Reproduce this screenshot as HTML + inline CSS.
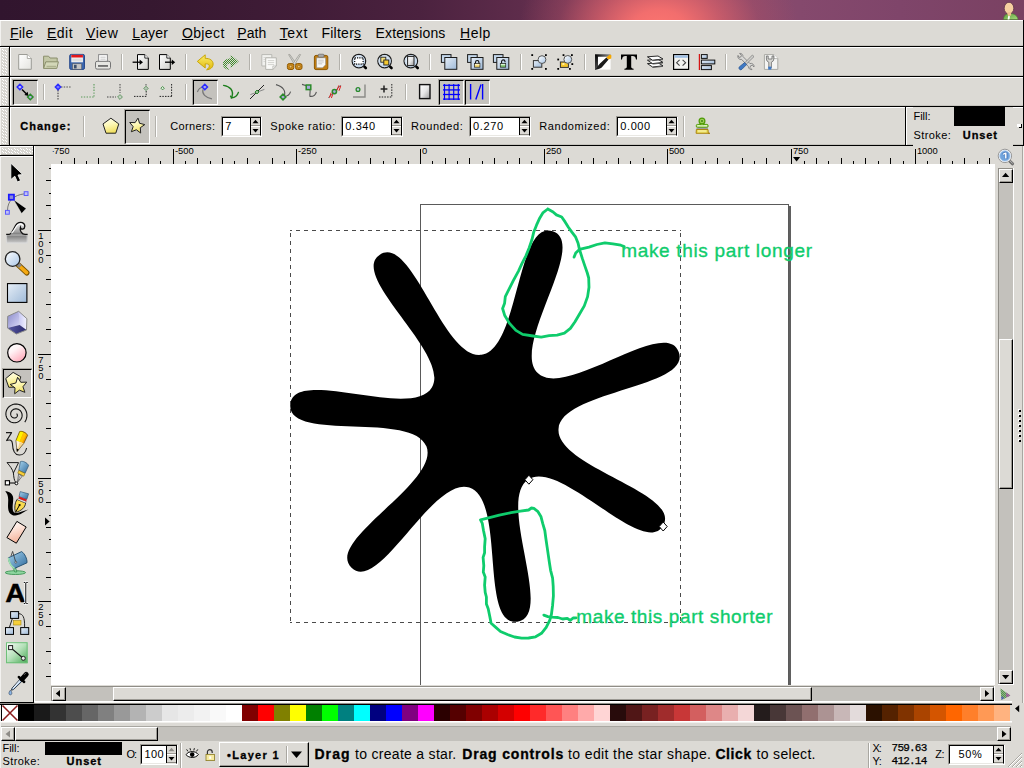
<!DOCTYPE html>
<html><head><meta charset="utf-8"><title>Inkscape</title>
<style>
html,body{margin:0;padding:0;}
body{width:1024px;height:768px;overflow:hidden;position:relative;background:#dcdad5;font-family:"Liberation Sans",sans-serif;}
body div,body svg{position:absolute;display:block;}
svg{overflow:visible;}
u{text-decoration:underline;text-underline-offset:1px;text-decoration-thickness:1px;}
</style></head><body>
<div style="left:0;top:0;width:1024px;height:20px;background:radial-gradient(ellipse 140px 100px at 659px 30px, rgba(253,118,112,1) 0%, rgba(248,112,110,.95) 20%, rgba(228,100,106,.66) 45%, rgba(185,82,100,.3) 72%, rgba(150,70,100,0) 100%),linear-gradient(90deg,#31152e 0,#361830 150px,#401c37 300px,#4b223f 420px,#5e2c4b 520px,#7a3c5c 600px,#8d4a6a 700px,#85496d 800px,#7f456a 900px,#7a4162 1024px);"></div>
<svg style="left:1002px;top:1px;" width="18" height="19" viewBox="0 0 18 19"><defs><linearGradient id="ug" x1="0" y1="0" x2="1" y2="1"><stop offset="0" stop-color="#5d9a3a"/><stop offset="1" stop-color="#a6dc7c"/></linearGradient></defs>
<path d="M1.5 18.5 C1.5 14 5 12.5 8 12.5 C12 12.5 15.5 14.5 16 18.5Z" fill="url(#ug)" stroke="#4a7a30" stroke-width=".6"/>
<path d="M5.6 18.5 L6.2 15 L8 15.2 L7.4 18.5Z" fill="#fff"/>
<ellipse cx="7" cy="7.2" rx="4.8" ry="5.9" fill="#f6cfa0" stroke="#5a3048" stroke-width=".8"/>
<path d="M5 11.5 L9 11 L9.2 14.5 L6 15Z" fill="#f0c090"/></svg>
<div style="left:0px;top:20px;width:1024px;height:748px;background:#dcdad5;"></div>
<div style="left:0px;top:20px;width:1023px;height:1px;background:#fff;"></div>
<div style="left:0px;top:21px;width:1px;height:747px;background:#f3f2f0;"></div>
<div style="left:1023px;top:20px;width:1px;height:126px;background:#000;"></div>
<div style="left:1022px;top:146px;width:1px;height:557px;background:#a9a7a1;"></div>
<div style="left:1023px;top:146px;width:1px;height:557px;background:#f1f0ed;"></div>
<div style="left:0px;top:46px;width:1023px;height:1px;background:#000;"></div>
<div style="left:0px;top:76px;width:1023px;height:1px;background:#000;"></div>
<div style="left:0px;top:106px;width:1023px;height:1px;background:#000;"></div>
<div style="left:0px;top:145px;width:1023px;height:1px;background:#000;"></div>
<div style="left:10px;top:47px;width:1013px;height:1px;background:#fff;"></div>
<div style="left:10px;top:77px;width:1013px;height:1px;background:#fff;"></div>
<div style="left:10px;top:107px;width:1013px;height:1px;background:#fff;"></div>
<div style="left:9px;top:46px;width:1px;height:100px;background:#000;"></div>
<div style="left:10px;top:47px;width:1px;height:98px;background:#fff;"></div>
<div style="left:9px;top:76px;width:2px;height:1px;background:#000;"></div>
<div style="left:9px;top:106px;width:2px;height:1px;background:#000;"></div>
<svg style="left:0;top:0" width="0" height="0"><defs><pattern id="pH" width="6" height="3" patternUnits="userSpaceOnUse"><rect x="0" y="0" width="1" height="1" fill="#fff"/><rect x="1" y="1" width="1" height="1" fill="#fff"/><rect x="3" y="1" width="1" height="1" fill="#fff"/><rect x="4" y="2" width="1" height="1" fill="#fff"/></pattern></defs></svg>
<svg style="left:1px;top:48px;shape-rendering:crispEdges;" width="8" height="28" viewBox="0 0 8 28"><rect width="8" height="28" fill="#d8d6d1"/><rect x="7" width="1" height="28" fill="#b4b2ac"/><g transform="translate(1,1)"><rect width="6" height="27" fill="url(#pH)"/></g></svg>
<svg style="left:1px;top:78px;shape-rendering:crispEdges;" width="8" height="28" viewBox="0 0 8 28"><rect width="8" height="28" fill="#d8d6d1"/><rect x="7" width="1" height="28" fill="#b4b2ac"/><g transform="translate(1,1)"><rect width="6" height="27" fill="url(#pH)"/></g></svg>
<svg style="left:1px;top:108px;shape-rendering:crispEdges;" width="8" height="37" viewBox="0 0 8 37"><rect width="8" height="37" fill="#d8d6d1"/><rect x="7" width="1" height="37" fill="#b4b2ac"/><g transform="translate(1,1)"><rect width="6" height="36" fill="url(#pH)"/></g></svg>
<div style="left:0px;top:47px;width:9px;height:1px;background:#fff;"></div>
<div style="left:0px;top:77px;width:9px;height:1px;background:#fff;"></div>
<div style="left:0px;top:107px;width:9px;height:1px;background:#fff;"></div>
<div style="left:0px;top:45px;width:1023px;height:1px;background:#c6c4be;"></div>
<div style="left:0px;top:75px;width:1023px;height:1px;background:#c6c4be;"></div>
<div style="left:0px;top:105px;width:1023px;height:1px;background:#c6c4be;"></div>
<div style="left:0px;top:144px;width:1023px;height:1px;background:#c6c4be;"></div>
<div style="left:9px;top:46px;width:1px;height:100px;background:#000;"></div>
<div style="left:0px;top:21px;width:1px;height:747px;background:#f3f2f0;"></div>
<div style="left:9.90px;top:26.15px;font:14px/14px 'Liberation Sans';color:#000;white-space:pre;letter-spacing:0.280px;"><u>F</u>ile</div>
<div style="left:46.90px;top:26.15px;font:14px/14px 'Liberation Sans';color:#000;white-space:pre;letter-spacing:0.525px;"><u>E</u>dit</div>
<div style="left:86.00px;top:26.15px;font:14px/14px 'Liberation Sans';color:#000;white-space:pre;letter-spacing:0.569px;"><u>V</u>iew</div>
<div style="left:132.20px;top:26.15px;font:14px/14px 'Liberation Sans';color:#000;white-space:pre;letter-spacing:0.145px;"><u>L</u>ayer</div>
<div style="left:181.90px;top:26.15px;font:14px/14px 'Liberation Sans';color:#000;white-space:pre;letter-spacing:0.388px;"><u>O</u>bject</div>
<div style="left:237.20px;top:26.15px;font:14px/14px 'Liberation Sans';color:#000;white-space:pre;letter-spacing:0.100px;"><u>P</u>ath</div>
<div style="left:279.70px;top:26.15px;font:14px/14px 'Liberation Sans';color:#000;white-space:pre;letter-spacing:0.641px;"><u>T</u>ext</div>
<div style="left:321.40px;top:26.15px;font:14px/14px 'Liberation Sans';color:#000;white-space:pre;letter-spacing:0.265px;">Filter<u>s</u></div>
<div style="left:375.50px;top:26.15px;font:14px/14px 'Liberation Sans';color:#000;white-space:pre;letter-spacing:0.146px;">Exte<u>n</u>sions</div>
<div style="left:460.00px;top:26.15px;font:14px/14px 'Liberation Sans';color:#000;white-space:pre;letter-spacing:0.502px;"><u>H</u>elp</div>
<div style="left:121px;top:54px;width:1px;height:16px;background:#b3b1ab;"></div>
<div style="left:122px;top:54px;width:1px;height:16px;background:#fff;"></div>
<div style="left:185px;top:54px;width:1px;height:16px;background:#b3b1ab;"></div>
<div style="left:186px;top:54px;width:1px;height:16px;background:#fff;"></div>
<div style="left:249px;top:54px;width:1px;height:16px;background:#b3b1ab;"></div>
<div style="left:250px;top:54px;width:1px;height:16px;background:#fff;"></div>
<div style="left:339px;top:54px;width:1px;height:16px;background:#b3b1ab;"></div>
<div style="left:340px;top:54px;width:1px;height:16px;background:#fff;"></div>
<div style="left:429px;top:54px;width:1px;height:16px;background:#b3b1ab;"></div>
<div style="left:430px;top:54px;width:1px;height:16px;background:#fff;"></div>
<div style="left:520px;top:54px;width:1px;height:16px;background:#b3b1ab;"></div>
<div style="left:521px;top:54px;width:1px;height:16px;background:#fff;"></div>
<div style="left:584px;top:54px;width:1px;height:16px;background:#b3b1ab;"></div>
<div style="left:585px;top:54px;width:1px;height:16px;background:#fff;"></div>
<div style="left:725px;top:54px;width:1px;height:16px;background:#b3b1ab;"></div>
<div style="left:726px;top:54px;width:1px;height:16px;background:#fff;"></div>
<div style="left:43px;top:84px;width:1px;height:16px;background:#b3b1ab;"></div>
<div style="left:44px;top:84px;width:1px;height:16px;background:#fff;"></div>
<div style="left:185px;top:84px;width:1px;height:16px;background:#b3b1ab;"></div>
<div style="left:186px;top:84px;width:1px;height:16px;background:#fff;"></div>
<div style="left:405px;top:84px;width:1px;height:16px;background:#b3b1ab;"></div>
<div style="left:406px;top:84px;width:1px;height:16px;background:#fff;"></div>
<div style="left:12px;top:79px;width:26px;height:1px;background:#a9a7a1;"></div>
<div style="left:12px;top:79px;width:1px;height:26px;background:#a9a7a1;"></div>
<div style="left:13px;top:80px;width:25px;height:25px;background:#c4c2bd;box-sizing:border-box;border-top:1px solid #000;border-left:1px solid #000;border-bottom:1px solid #fff;border-right:1px solid #fff;"></div>
<div style="left:192px;top:79px;width:26px;height:1px;background:#a9a7a1;"></div>
<div style="left:192px;top:79px;width:1px;height:26px;background:#a9a7a1;"></div>
<div style="left:193px;top:80px;width:25px;height:25px;background:#c4c2bd;box-sizing:border-box;border-top:1px solid #000;border-left:1px solid #000;border-bottom:1px solid #fff;border-right:1px solid #fff;"></div>
<div style="left:438px;top:79px;width:26px;height:1px;background:#a9a7a1;"></div>
<div style="left:438px;top:79px;width:1px;height:26px;background:#a9a7a1;"></div>
<div style="left:439px;top:80px;width:25px;height:25px;background:#c4c2bd;box-sizing:border-box;border-top:1px solid #000;border-left:1px solid #000;border-bottom:1px solid #fff;border-right:1px solid #fff;"></div>
<div style="left:464px;top:79px;width:26px;height:1px;background:#a9a7a1;"></div>
<div style="left:464px;top:79px;width:1px;height:26px;background:#a9a7a1;"></div>
<div style="left:465px;top:80px;width:25px;height:25px;background:#c4c2bd;box-sizing:border-box;border-top:1px solid #000;border-left:1px solid #000;border-bottom:1px solid #fff;border-right:1px solid #fff;"></div>
<svg style="left:0px;top:0px;" width="1024" height="768" viewBox="0 0 1024 768"><defs>
<linearGradient id="gDoc" x1="0" y1="0" x2="1" y2="1"><stop offset="0" stop-color="#ffffff"/><stop offset="1" stop-color="#e4e4e0"/></linearGradient>
<linearGradient id="gDocD" x1="0" y1="0" x2="1" y2="1"><stop offset="0" stop-color="#ffffff"/><stop offset="1" stop-color="#cfcfca"/></linearGradient>
<linearGradient id="gBlue" x1="0" y1="0" x2="1" y2="1"><stop offset="0" stop-color="#e6eef7"/><stop offset="1" stop-color="#9fbad8"/></linearGradient>
<linearGradient id="gLens" x1="0" y1="0" x2="1" y2="1"><stop offset="0" stop-color="#ffffff"/><stop offset="1" stop-color="#a9c6e6"/></linearGradient>
<linearGradient id="gYel" x1="0.2" y1="0" x2="0.5" y2="1"><stop offset="0" stop-color="#fffff0"/><stop offset=".45" stop-color="#fdf8b8"/><stop offset="1" stop-color="#f1df5e"/></linearGradient>
<linearGradient id="gPage" x1="0" y1="0" x2="1" y2="1"><stop offset="0" stop-color="#ffffff"/><stop offset=".5" stop-color="#e8e8e8"/><stop offset="1" stop-color="#9a9a9a"/></linearGradient>
<linearGradient id="gPink" x1="0.1" y1="0" x2=".8" y2="1"><stop offset="0" stop-color="#ffffff"/><stop offset=".35" stop-color="#fff4f6"/><stop offset="1" stop-color="#ffa4b6"/></linearGradient>
<linearGradient id="gErase" x1="0" y1="0" x2=".3" y2="1"><stop offset="0" stop-color="#ffffff"/><stop offset=".4" stop-color="#fde6dc"/><stop offset="1" stop-color="#f4b49c"/></linearGradient>
<linearGradient id="gWave" x1="0" y1="0" x2="0" y2="1"><stop offset="0" stop-color="#f4f4f4"/><stop offset=".45" stop-color="#a0a0a0"/><stop offset=".58" stop-color="#747474"/><stop offset="1" stop-color="#cfcfcf"/></linearGradient>
<linearGradient id="gGreen" x1="0" y1="0" x2="1" y2="1"><stop offset="0" stop-color="#ffffff"/><stop offset=".5" stop-color="#b4e0b8"/><stop offset="1" stop-color="#46a852"/></linearGradient>
<linearGradient id="gPencil" x1="0" y1="0" x2="1" y2=".3"><stop offset="0" stop-color="#fff000"/><stop offset="1" stop-color="#f08000"/></linearGradient>
<linearGradient id="gBucket" x1="0" y1="0" x2="1" y2="1"><stop offset="0" stop-color="#a8d4ee"/><stop offset="1" stop-color="#2f6a9c"/></linearGradient>
<linearGradient id="gBoxL" x1="0" y1="0" x2="1" y2="1"><stop offset="0" stop-color="#8888c8"/><stop offset="1" stop-color="#d8d8f8"/></linearGradient>
<linearGradient id="gBoxR" x1="0" y1="0" x2="1" y2="0"><stop offset="0" stop-color="#c8c8f4"/><stop offset="1" stop-color="#f4f4ff"/></linearGradient>
<linearGradient id="gBoxB" x1="0" y1="0" x2="1" y2="0"><stop offset="0" stop-color="#5a5aa4"/><stop offset="1" stop-color="#28286c"/></linearGradient>
<linearGradient id="gUndo" x1="0" y1="0" x2="0" y2="1"><stop offset="0" stop-color="#fbee6a"/><stop offset="1" stop-color="#e2b80c"/></linearGradient>
<linearGradient id="gFS" x1="0" y1="0" x2="1" y2="0"><stop offset="0" stop-color="#000"/><stop offset="1" stop-color="#999"/></linearGradient>
<linearGradient id="gFS2" x1="0" y1="0" x2="0" y2="1"><stop offset="0" stop-color="#000"/><stop offset="1" stop-color="#555"/></linearGradient>
<pattern id="pChk" width="2" height="2" patternUnits="userSpaceOnUse"><rect width="1" height="1" fill="#3d8a2a"/><rect x="1" y="1" width="1" height="1" fill="#3d8a2a"/></pattern>
<radialGradient id="gCms"><stop offset="0" stop-color="#fff"/><stop offset="1" stop-color="#888"/></radialGradient>
</defs><path d="M18.7 54.5 h8.6 l4 4 v10.8 h-12.6z" fill="url(#gDoc)" stroke="#9c9c96" stroke-width="1" stroke-linejoin="round"/><path d="M27.299999999999997 54.5 v4 h4" fill="#fff" stroke="#9c9c96" stroke-width="0.8" stroke-linejoin="round"/><path d="M43.6 68.3 V56.2 h5 l1.4 1.8 h7.2 v4" fill="#c3c7a6" stroke="#8a8e6c" stroke-width="1" stroke-linejoin="round"/><path d="M43.6 68.4 l2.2 -6.6 h12.6 l-1.6 6.6z" fill="#d3d7b8" stroke="#8a8e6c" stroke-width="1" stroke-linejoin="round"/><path d="M46.5 66.5 h9.5" stroke="#aeb290" stroke-width="1.5"/><rect x="69.7" y="54.4" width="14.8" height="15" rx="1.5" fill="#3b66ad" stroke="#2a4b8d" stroke-width="1"/><rect x="71.3" y="54.9" width="11.6" height="7.4" fill="#f4f4f4"/><rect x="71.3" y="54.9" width="11.6" height="2.6" fill="#e4181c"/><path d="M72.3 59.2 h9.6 M72.3 60.8 h9.6" stroke="#c8c8c8" stroke-width=".7"/><rect x="72.6" y="63.8" width="9" height="5.4" fill="#c4c4c4" stroke="#555" stroke-width=".5"/><rect x="74" y="64.8" width="2.6" height="3.6" fill="#3b4f6d"/><rect x="98.6" y="54.6" width="8.8" height="7.5" fill="#fbfbfb" stroke="#8c8c8c" stroke-width="1"/><path d="M100.4 57.2 h5.2 M100.4 59.2 h5.2" stroke="#bdbdbd" stroke-width=".8"/><rect x="95.5" y="61.3" width="15" height="7.8" rx="1.6" fill="#e6e6e2" stroke="#757575" stroke-width="1"/><rect x="98" y="65.2" width="10" height="1.5" fill="#555"/><path d="M137.5 54.6 h7.300000000000001 l3.5 3.5 v11.3 h-10.8z" fill="url(#gDocD)" stroke="#000" stroke-width="1" stroke-linejoin="round"/><path d="M144.8 54.6 v3.5 h3.5" fill="#fff" stroke="#000" stroke-width="0.8" stroke-linejoin="round"/><path d="M132.6 62.2 h8" stroke="#000" stroke-width="1.3"/><path d="M139.6 59.4 l3.4 2.8 l-3.4 2.8z" fill="#000"/><path d="M159.5 54.6 h7.300000000000001 l3.5 3.5 v11.3 h-10.8z" fill="url(#gDocD)" stroke="#000" stroke-width="1" stroke-linejoin="round"/><path d="M166.8 54.6 v3.5 h3.5" fill="#fff" stroke="#000" stroke-width="0.8" stroke-linejoin="round"/><path d="M165 62.2 h8" stroke="#000" stroke-width="1.3"/><path d="M171.8 59.4 l3.4 2.8 l-3.4 2.8z" fill="#000"/><path d="M197.3 61.4 L205.2 54.8 V58.4 C210 58.2 213.1 60.6 213.1 64 C213.1 67.2 210.6 69.5 206.6 69.8 C208.6 68.2 209.6 66.8 209.2 65.3 C208.8 64 207.2 63.7 205.2 63.9 V68 Z" fill="url(#gUndo)" stroke="#c9a606" stroke-width="1" stroke-linejoin="round"/><g transform="translate(436,0) scale(-1,1)"><path d="M197.3 61.4 L205.2 54.8 V58.4 C210 58.2 213.1 60.6 213.1 64 C213.1 67.2 210.6 69.5 206.6 69.8 C208.6 68.2 209.6 66.8 209.2 65.3 C208.8 64 207.2 63.7 205.2 63.9 V68 Z" fill="url(#pChk)"/></g><path d="M261.8 54.6 h9.99 l0.01 0.01 v11.39 h-10z" fill="#f1f1ee" stroke="#b9b9b4" stroke-width="1" stroke-linejoin="round"/><path d="M271.79 54.6 v0.01 h0.01" fill="#fff" stroke="#b9b9b4" stroke-width="0.8" stroke-linejoin="round"/><path d="M263.5 57.5 h6.5 M263.5 59.5 h6.5 M263.5 61.5 h3" stroke="#d2d2ce" stroke-width=".8"/><path d="M265.7 57.8 h10.6 v8.2 l-3.4 3.4 h-7.2z" fill="#fafaf8" stroke="#b4b4ae" stroke-width="1"/><path d="M276.3 66 h-3.4 v3.4" fill="none" stroke="#b4b4ae" stroke-width=".8"/><path d="M267.8 60.6 h6.4 M267.8 62.6 h6.4 M267.8 64.6 h6.4" stroke="#cfcfca" stroke-width=".9"/><path d="M288.6 54.6 l1.2 -.2 l6.6 9.6 l-1.8 .8z" fill="#d4d4d0" stroke="#9a9a94" stroke-width=".8"/><path d="M300.6 54.6 l-1.2 -.2 l-6.6 9.6 l1.8 .8z" fill="#e0e0dc" stroke="#9a9a94" stroke-width=".8"/><rect x="287.4" y="63.6" width="6.4" height="5.9" rx="1.8" fill="#cb8a1b" stroke="#8f5902" stroke-width="1"/><rect x="295.6" y="63.6" width="6.4" height="5.9" rx="1.8" fill="#cb8a1b" stroke="#8f5902" stroke-width="1"/><circle cx="290.6" cy="66.6" r="1.3" fill="#e8c47c" stroke="#8f5902" stroke-width=".6"/><circle cx="298.8" cy="66.6" r="1.3" fill="#e8c47c" stroke="#8f5902" stroke-width=".6"/><rect x="314.4" y="55.4" width="13.4" height="14.2" rx="1.6" fill="#c17d11" stroke="#8f5902" stroke-width="1"/><path d="M316.6 57.8 h9 v7 l-3 3 h-6z" fill="#f8f8f6" stroke="#888" stroke-width=".6"/><path d="M318.2 60.2 h5.6 M318.2 62 h5.6 M318.2 63.8 h4" stroke="#bbb" stroke-width=".8"/><rect x="318.2" y="54.2" width="5.8" height="3" rx="1" fill="#aaa" stroke="#666" stroke-width=".7"/><path d="M364.12 66.32 l1.7 1.7" stroke="#000" stroke-width="2.6" stroke-linecap="round"/><circle cx="358.9" cy="61.1" r="6.8" fill="url(#gLens)" stroke="#1c1c1c" stroke-width="1.2"/><circle cx="358.9" cy="61.1" r="5.6" fill="none" stroke="#c9d9ea" stroke-width="1"/><rect x="354.7" y="57.8" width="8.4" height="6.4" fill="#fff" stroke="#000" stroke-width="1.2" stroke-dasharray="1.2 1.1"/><path d="M389.82000000000005 66.32 l1.7 1.7" stroke="#000" stroke-width="2.6" stroke-linecap="round"/><circle cx="384.6" cy="61.1" r="6.8" fill="url(#gLens)" stroke="#1c1c1c" stroke-width="1.2"/><circle cx="384.6" cy="61.1" r="5.6" fill="none" stroke="#c9d9ea" stroke-width="1"/><rect x="380.8" y="57.2" width="5" height="5" fill="#f6e27a" stroke="#222" stroke-width=".9"/><rect x="383.8" y="60" width="5" height="5" fill="#f4c830" stroke="#222" stroke-width=".9"/><path d="M416.02000000000004 66.32 l1.7 1.7" stroke="#000" stroke-width="2.6" stroke-linecap="round"/><circle cx="410.8" cy="61.1" r="6.8" fill="url(#gLens)" stroke="#1c1c1c" stroke-width="1.2"/><circle cx="410.8" cy="61.1" r="5.6" fill="none" stroke="#c9d9ea" stroke-width="1"/><rect x="407.6" y="56.4" width="6.4" height="9.2" fill="url(#gPage)" stroke="#222" stroke-width="1"/><rect x="441.4" y="54.6" width="9.6" height="7.8" fill="#c3d6ea" stroke="#1a1a1a" stroke-width="1"/><rect x="444.79999999999995" y="57.5" width="12" height="11.8" fill="url(#gBlue)" stroke="#1a1a1a" stroke-width="1"/><rect x="467.6" y="54.6" width="9.6" height="7.8" fill="#c3d6ea" stroke="#1a1a1a" stroke-width="1"/><rect x="471.0" y="57.5" width="12" height="11.8" fill="url(#gBlue)" stroke="#1a1a1a" stroke-width="1"/><path d="M475.5 63.8 v-1.6 a1.7 1.7 0 0 1 3.4 0 v1.6" fill="none" stroke="#111" stroke-width="1.1"/><rect x="474.5" y="63.6" width="5.4" height="3.6" fill="#f3d668" stroke="#222" stroke-width=".7"/><rect x="475.0" y="64.1" width="4.4" height="1.1" fill="#fff6cc"/><rect x="493.4" y="54.6" width="9.6" height="7.8" fill="#c3d6ea" stroke="#1a1a1a" stroke-width="1"/><rect x="496.79999999999995" y="57.5" width="12" height="11.8" fill="url(#gBlue)" stroke="#1a1a1a" stroke-width="1"/><path d="M501.59999999999997 63.6 v-2 a1.7 1.7 0 0 1 3.4 0 v.6" fill="none" stroke="#111" stroke-width="1.1"/><rect x="500.29999999999995" y="63.6" width="5.4" height="3.6" fill="#7cc46c" stroke="#222" stroke-width=".7"/><rect x="500.79999999999995" y="64.1" width="4.4" height="1.1" fill="#e4f6dc"/><rect x="533.4" y="60.6" width="8.4" height="6.6" fill="url(#gBlue)" stroke="#333" stroke-width="1"/><circle cx="542" cy="59.6" r="3.9" fill="url(#gLens)" stroke="#555" stroke-width="1"/><rect x="531.3" y="54.2" width="1.8" height="1.8" fill="#000"/><rect x="545" y="54.2" width="1.8" height="1.8" fill="#000"/><rect x="531.3" y="68" width="1.8" height="1.8" fill="#000"/><rect x="545" y="68" width="1.8" height="1.8" fill="#000"/><rect x="560.4" y="62" width="8" height="5.4" fill="#f5c72c" stroke="#333" stroke-width="1"/><rect x="562.4" y="63.2" width="2" height="1.6" fill="#fff6c0"/><circle cx="567.8" cy="59.4" r="3.9" fill="url(#gLens)" stroke="#555" stroke-width="1"/><rect x="562.6" y="54.2" width="1.8" height="1.8" fill="#000"/><rect x="571" y="54.2" width="1.8" height="1.8" fill="#000"/><rect x="557.3" y="58.6" width="1.8" height="1.8" fill="#000"/><rect x="571.4" y="63.2" width="1.8" height="1.8" fill="#000"/><rect x="557.3" y="68" width="1.8" height="1.8" fill="#000"/><rect x="569" y="68" width="1.8" height="1.8" fill="#000"/><rect x="595.6" y="54.6" width="15" height="15" fill="#fff"/><path d="M595.2 54.2 H611 L609 56.8 H597.8 V68 L595.2 70z" fill="url(#gFS)"/><path d="M595.2 54.2 V70 L597.8 67.5 V56.8z" fill="url(#gFS2)"/><path d="M595.4 69.8 C599 69.4 601.6 68.2 603 66 L608.6 59.4 L606.4 57.6 L600 63.4 C598 65.4 597 67.6 595.4 69.8z" fill="#1c1c1c"/><path d="M606.4 57.6 L609.8 54.6 L611.4 55.2 L611.2 58.4 L608.6 59.4z" fill="#f6a800"/><path d="M621 54.4 H637 V59.4 H636 C635.6 57 634.6 56 632.6 56 H631.2 V66.6 C631.2 68 631.8 68.6 633.6 68.7 V69.7 H624.4 V68.7 C626.2 68.6 626.8 68 626.8 66.6 V56 H625.4 C623.4 56 622.4 57 622 59.4 H621z" fill="#000"/><path d="M647.4 63.6 L658 62.800000000000004 L663 65.8 L652.6 67.0z" fill="#fdfdfd" stroke="#2a2a2a" stroke-width="1" stroke-linejoin="round"/><path d="M652.6 67.5 L663 66.4" stroke="#555" stroke-width=".9"/><path d="M647.4 60.2 L658 59.400000000000006 L663 62.400000000000006 L652.6 63.6z" fill="#fdfdfd" stroke="#2a2a2a" stroke-width="1" stroke-linejoin="round"/><path d="M652.6 64.10000000000001 L663 63.0" stroke="#555" stroke-width=".9"/><path d="M647.4 56.8 L658 56.0 L663 59.0 L652.6 60.199999999999996z" fill="#fdfdfd" stroke="#2a2a2a" stroke-width="1" stroke-linejoin="round"/><path d="M652.6 60.699999999999996 L663 59.599999999999994" stroke="#555" stroke-width=".9"/><rect x="673.6" y="54.6" width="15" height="14.8" fill="#f3f3f0" stroke="#000" stroke-width="1.2"/><rect x="674.4" y="55.4" width="13.4" height="2.4" fill="#9fbfe4"/><path d="M679.6 59.8 l-3 2.9 l3 2.9 M682.6 59.8 l3 2.9 l-3 2.9" fill="none" stroke="#444" stroke-width="1.1"/><rect x="698.8" y="54" width="1.1" height="16" fill="#d40000"/><rect x="701.4" y="54.6" width="5.8" height="3.8" fill="url(#gBlue)" stroke="#111" stroke-width="1"/><rect x="701.4" y="60.1" width="13.4" height="3.8" fill="url(#gBlue)" stroke="#111" stroke-width="1"/><rect x="701.4" y="65.6" width="10" height="4" fill="url(#gBlue)" stroke="#111" stroke-width="1"/><path d="M739 55.4 a3 3 0 0 0 3.6 4 L749.4 66.6 a3 3 0 0 0 3.6 3 l-2 -2 l.6 -1.8 l1.8 -.6 l1.6 1.8 a3 3 0 0 0 -4 -3.4 L744 56.6 a3 3 0 0 0 -3.4 -3.2 l1.8 2 l-.6 1.6 l-1.8 .4z" fill="#d8d8d6" stroke="#777" stroke-width=".8" transform="translate(-1,0)"/><path d="M752.4 55 l-8.2 8.4 l1.4 1.4 l8.4 -8.2z" fill="#cfcfcc" stroke="#777" stroke-width=".7"/><path d="M744.6 62.6 l2 2 l-4.6 4.6 a1.5 1.5 0 0 1 -2.6 -2.4z" fill="#3f79c4" stroke="#2a5590" stroke-width=".7"/><path d="M764.4 54.6 h9.4 l4 4 v10.8 h-13.4z" fill="#f4f4f2" stroke="#a9a9a4" stroke-width="1" stroke-linejoin="round"/><path d="M773.8 54.6 v4 h4" fill="#fff" stroke="#a9a9a4" stroke-width="0.8" stroke-linejoin="round"/><path d="M766.4 56 v3 a3.4 3.4 0 0 0 2.4 3.2 v5.6 h2.6 v-5.6 a3.4 3.4 0 0 0 2.4 -3.2 v-3 h-1.8 v3 h-3.8 v-3z" fill="#d6d6d2" stroke="#6a6a6a" stroke-width=".8"/><rect x="768.2" y="66.6" width="3.2" height="3" fill="#3f79c4"/></svg>
<svg style="left:0px;top:0px;" width="1024" height="768" viewBox="0 0 1024 768"><path d="M22 89.4 L27 94.4" stroke="#000" stroke-width="1.4"/><path d="M28.6 96 l-4.2 -1 l3.2 -3.2z" fill="#000"/><path d="M19.9 84.3 L22.599999999999998 87 L19.9 89.7 L17.2 87z" fill="#b4b4ff" stroke="#2a2aff" stroke-width="1.5"/><path d="M30.3 94.3 L33.0 97 L30.3 99.7 L27.6 97z" fill="#b0b0e0" stroke="#2a8a2a" stroke-width="1.5"/><path d="M61 87 L71 87" stroke="#555" stroke-width="1.0" stroke-dasharray="1.5 1.2" fill="none"/><path d="M58 90 L58 99.5" stroke="#333" stroke-width="1.0" stroke-dasharray="1.5 1.2" fill="none"/><path d="M58 84.3 L60.7 87 L58 89.7 L55.3 87z" fill="#7a7aff" stroke="#2a2aff" stroke-width="1.4"/><path d="M94 84 L94 97" stroke="#5a9a5a" stroke-width="1.1" stroke-dasharray="1.4 1.4" fill="none"/><path d="M81 97 L94 97" stroke="#5a9a5a" stroke-width="1.1" stroke-dasharray="1.4 1.4" fill="none"/><path d="M120 84 L120 93" stroke="#444" stroke-width="1.0" stroke-dasharray="1.5 1.2" fill="none"/><path d="M107 97 L116 97" stroke="#444" stroke-width="1.0" stroke-dasharray="1.5 1.2" fill="none"/><path d="M120 94.6 L122.4 97 L120 99.4 L117.6 97z" fill="#c4d0c4" stroke="#4a8a4a" stroke-width="0.8"/><path d="M134 96.4 L147 96.4" stroke="#222" stroke-width="1.0" stroke-dasharray="1.5 1.2" fill="none"/><path d="M146.2 91 L146.2 96" stroke="#222" stroke-width="1.0" stroke-dasharray="1.5 1.2" fill="none"/><path d="M146 86.2 L148.2 88.4 L146 90.60000000000001 L143.8 88.4z" fill="#b8c4b8" stroke="#4a8a4a" stroke-width="0.8"/><path d="M146 84 v1.6" stroke="#555" stroke-width="1"/><path d="M159.6 96.4 L172 96.4" stroke="#222" stroke-width="1.0" stroke-dasharray="1.5 1.2" fill="none"/><path d="M171.6 84 L171.6 96" stroke="#222" stroke-width="1.0" stroke-dasharray="1.5 1.2" fill="none"/><path d="M162.6 86.5 L164.29999999999998 88.2 L162.6 89.9 L160.9 88.2z" fill="#e0e8e0" stroke="#3a8a3a" stroke-width="0.9"/><path d="M197.4 92 C198.4 89 200 87.6 202.6 87.2" fill="none" stroke="#777" stroke-width="1.1"/><path d="M203 89.4 C201.6 94 205.6 97.6 211.9 98.9" fill="none" stroke="#777" stroke-width="1.2"/><path d="M204.8 84.3 L207.5 87 L204.8 89.7 L202.10000000000002 87z" fill="#a8a8e8" stroke="#2a2aff" stroke-width="1.5"/><path d="M223.6 85.4 C229.4 86.4 234.6 90 231.6 97.8 C234.6 97.6 237.4 95.6 238.4 92.4" fill="none" stroke="#1d7f1d" stroke-width="1.4" stroke-linecap="round"/><path d="M231.6 97.8 L230.6 96.2" fill="none" stroke="#1d7f1d" stroke-width="1.4" stroke-linecap="round"/><path d="M250 99 L264 85" stroke="#222" stroke-width="1"/><path d="M250.4 94.6 L264.4 89.4" stroke="#888" stroke-width="1"/><path d="M257 90 L259 92 L257 94 L255 92z" fill="#9ab89a" stroke="#2a8a2a" stroke-width="1"/><path d="M276 84.6 C283 86.6 286.4 91 284 96.4 C287 96.4 289.6 94.6 290.6 91.6" fill="none" stroke="#555" stroke-width="1.1"/><path d="M283 94.2 L285.8 97 L283 99.8 L280.2 97z" fill="#a8a8dc" stroke="#2a8a2a" stroke-width="1.6"/><path d="M302 84.4 C305 85 307 86 308.4 87.4 C312 90 309 94 310 96.4 C313 96.6 315.6 95 316.4 91.8" fill="none" stroke="#555" stroke-width="1.1"/><rect x="306.2" y="85" width="4.6" height="4.6" fill="#a8a8dc" stroke="#2a8a2a" stroke-width="1.5"/><path d="M328.4 98 L340.6 85.2" stroke="#666" stroke-width="1"/><path d="M329.4 97.6 l1.8 -5 M331.4 98 l1.8 -5 M337 90.4 l1.8 -5 M339 90.8 l1.8 -5" stroke="#e02020" stroke-width="1"/><circle cx="334.4" cy="91.6" r="2.1" fill="#a8a8dc" stroke="#2a8a2a" stroke-width="1.5"/><path d="M353 97 H365 V84.4" fill="none" stroke="#8a8a86" stroke-width="1.4"/><circle cx="358" cy="89.5" r="1.9" fill="#c8c8e8" stroke="#2a8a2a" stroke-width="1.3"/><path d="M380.6 89 h6.8 M384 85.6 v6.8" stroke="#222" stroke-width="1.5"/><path d="M391.8 84 L391.8 97" stroke="#222" stroke-width="1.0" stroke-dasharray="1.5 1.2" fill="none"/><path d="M379 97 L392 97" stroke="#222" stroke-width="1.0" stroke-dasharray="1.5 1.2" fill="none"/><rect x="419.6" y="84.6" width="10.4" height="14" fill="url(#gPage)" stroke="#111" stroke-width="1.4"/><path d="M444.5 84 V100" stroke="#0000ff" stroke-width="1.15"/><path d="M449.1 84 V100" stroke="#0000ff" stroke-width="1.15"/><path d="M453.7 84 V100" stroke="#0000ff" stroke-width="1.15"/><path d="M458.3 84 V100" stroke="#0000ff" stroke-width="1.15"/><path d="M443 85.3 H460" stroke="#0000ff" stroke-width="1.3"/><path d="M443 89.9 H460" stroke="#0000ff" stroke-width="1.3"/><path d="M443 94.5 H460" stroke="#0000ff" stroke-width="1.3"/><path d="M443 99.1 H460" stroke="#0000ff" stroke-width="1.3"/><path d="M470.6 84 V99.6 M482.6 84 V99.6 M475.8 99.6 L481 84.4" stroke="#0000ff" stroke-width="1.4" fill="none"/></svg>
<div style="left:20.30px;top:120.69px;font:bold 11px/11px 'Liberation Sans';color:#000;white-space:pre;letter-spacing:1.000px;-webkit-text-stroke:.3px #000;">Change:</div>
<div style="left:83px;top:116px;width:1px;height:21px;background:#b3b1ab;"></div>
<div style="left:84px;top:116px;width:1px;height:21px;background:#fff;"></div>
<div style="left:124px;top:109px;width:26px;height:1px;background:#a9a7a1;"></div>
<div style="left:124px;top:109px;width:1px;height:35px;background:#a9a7a1;"></div>
<div style="left:125px;top:110px;width:25px;height:34px;background:#c4c2bd;box-sizing:border-box;border-top:1px solid #000;border-left:1px solid #000;border-bottom:1px solid #fff;border-right:1px solid #fff;"></div>
<div style="left:155px;top:116px;width:1px;height:21px;background:#b3b1ab;"></div>
<div style="left:156px;top:116px;width:1px;height:21px;background:#fff;"></div>
<svg style="left:0px;top:0px;" width="1024" height="768" viewBox="0 0 1024 768"><polygon points="110.90,118.20 118.79,123.94 115.78,133.21 106.02,133.21 103.01,123.94" fill="url(#gYel)" stroke="#222" stroke-width="1" stroke-linejoin="round"/><polygon points="138.01,118.08 139.54,123.27 144.78,124.61 140.32,127.67 140.66,133.06 136.37,129.76 131.34,131.75 133.16,126.66 129.71,122.49 135.12,122.64" fill="url(#gYel)" stroke="#222" stroke-width="1" stroke-linejoin="round"/><rect x="696.3" y="124.4" width="11.8" height="3" rx="1.2" fill="#b4de7c" stroke="#4e9a06" stroke-width="1"/><rect x="700.3" y="122.6" width="3.4" height="2.6" fill="#9ccf58" stroke="#4e9a06" stroke-width=".9"/><circle cx="702" cy="121" r="2.9" fill="#9ccf58" stroke="#4e9a06" stroke-width="1.2"/><circle cx="702" cy="121" r=".9" fill="#3a7f06"/><path d="M697.4 125.7 h9.6" stroke="#eefadc" stroke-width=".9"/><rect x="696.5" y="127.7" width="11.4" height="1.8" fill="#9c9c9c"/><path d="M696.4 129.5 h11.6 l.3 3.8 h1.6 h-13.8z" fill="#e9dc58" stroke="#a67c00" stroke-width=".9" stroke-linejoin="round"/><rect x="698" y="130" width="8.4" height="2.2" fill="#f6f0a4" opacity=".7"/></svg>
<div style="left:170.30px;top:120.69px;font:11px/11px 'Liberation Sans';color:#000;white-space:pre;letter-spacing:0.360px;">Corners:</div>
<div style="left:221px;top:116px;width:41px;height:21px;box-sizing:border-box;border-top:1px solid #9b9993;border-left:1px solid #9b9993;border-bottom:1px solid #fff;border-right:1px solid #fff;"></div>
<div style="left:222px;top:117px;width:39px;height:19px;background:#fff;box-sizing:border-box;border-top:1px solid #000;border-left:1px solid #000;border-right:1px solid #000;border-bottom:1px solid #e9e8e4;"></div>
<div style="left:250px;top:117px;width:1px;height:18px;background:#000;"></div>
<div style="left:251px;top:118px;width:9px;height:17px;background:#dcdad5;"></div>
<div style="left:251px;top:125px;width:9px;height:1px;background:#9b9993;"></div>
<div style="left:251px;top:126px;width:9px;height:1px;background:#fff;"></div>
<div style="left:251px;top:134px;width:9px;height:1px;background:#8a8882;"></div>
<svg style="left:251px;top:118px;" width="9" height="17" viewBox="0 0 9 17"><path d="M1.5 5.20 h6 l-3 -3.4z" fill="#000"/><path d="M1.5 11.00 h6 l-3 3.4z" fill="#000"/></svg>
<div style="left:225.20px;top:120.69px;font:11px/11px 'Liberation Sans';color:#000;white-space:pre;">7</div>
<div style="left:270.30px;top:120.69px;font:11px/11px 'Liberation Sans';color:#000;white-space:pre;letter-spacing:0.573px;">Spoke ratio:</div>
<div style="left:341px;top:116px;width:62px;height:21px;box-sizing:border-box;border-top:1px solid #9b9993;border-left:1px solid #9b9993;border-bottom:1px solid #fff;border-right:1px solid #fff;"></div>
<div style="left:342px;top:117px;width:60px;height:19px;background:#fff;box-sizing:border-box;border-top:1px solid #000;border-left:1px solid #000;border-right:1px solid #000;border-bottom:1px solid #e9e8e4;"></div>
<div style="left:391px;top:117px;width:1px;height:18px;background:#000;"></div>
<div style="left:392px;top:118px;width:9px;height:17px;background:#dcdad5;"></div>
<div style="left:392px;top:125px;width:9px;height:1px;background:#9b9993;"></div>
<div style="left:392px;top:126px;width:9px;height:1px;background:#fff;"></div>
<div style="left:392px;top:134px;width:9px;height:1px;background:#8a8882;"></div>
<svg style="left:392px;top:118px;" width="9" height="17" viewBox="0 0 9 17"><path d="M1.5 5.20 h6 l-3 -3.4z" fill="#000"/><path d="M1.5 11.00 h6 l-3 3.4z" fill="#000"/></svg>
<div style="left:345.30px;top:120.69px;font:11px/11px 'Liberation Sans';color:#000;white-space:pre;letter-spacing:0.593px;">0.340</div>
<div style="left:411.00px;top:120.69px;font:11px/11px 'Liberation Sans';color:#000;white-space:pre;letter-spacing:0.570px;">Rounded:</div>
<div style="left:469px;top:116px;width:62px;height:21px;box-sizing:border-box;border-top:1px solid #9b9993;border-left:1px solid #9b9993;border-bottom:1px solid #fff;border-right:1px solid #fff;"></div>
<div style="left:470px;top:117px;width:60px;height:19px;background:#fff;box-sizing:border-box;border-top:1px solid #000;border-left:1px solid #000;border-right:1px solid #000;border-bottom:1px solid #e9e8e4;"></div>
<div style="left:519px;top:117px;width:1px;height:18px;background:#000;"></div>
<div style="left:520px;top:118px;width:9px;height:17px;background:#dcdad5;"></div>
<div style="left:520px;top:125px;width:9px;height:1px;background:#9b9993;"></div>
<div style="left:520px;top:126px;width:9px;height:1px;background:#fff;"></div>
<div style="left:520px;top:134px;width:9px;height:1px;background:#8a8882;"></div>
<svg style="left:520px;top:118px;" width="9" height="17" viewBox="0 0 9 17"><path d="M1.5 5.20 h6 l-3 -3.4z" fill="#000"/><path d="M1.5 11.00 h6 l-3 3.4z" fill="#000"/></svg>
<div style="left:473.00px;top:120.69px;font:11px/11px 'Liberation Sans';color:#000;white-space:pre;letter-spacing:0.618px;">0.270</div>
<div style="left:539.30px;top:120.69px;font:11px/11px 'Liberation Sans';color:#000;white-space:pre;letter-spacing:0.559px;">Randomized:</div>
<div style="left:616px;top:116px;width:62px;height:21px;box-sizing:border-box;border-top:1px solid #9b9993;border-left:1px solid #9b9993;border-bottom:1px solid #fff;border-right:1px solid #fff;"></div>
<div style="left:617px;top:117px;width:60px;height:19px;background:#fff;box-sizing:border-box;border-top:1px solid #000;border-left:1px solid #000;border-right:1px solid #000;border-bottom:1px solid #e9e8e4;"></div>
<div style="left:666px;top:117px;width:1px;height:18px;background:#000;"></div>
<div style="left:667px;top:118px;width:9px;height:17px;background:#dcdad5;"></div>
<div style="left:667px;top:125px;width:9px;height:1px;background:#9b9993;"></div>
<div style="left:667px;top:126px;width:9px;height:1px;background:#fff;"></div>
<div style="left:667px;top:134px;width:9px;height:1px;background:#8a8882;"></div>
<svg style="left:667px;top:118px;" width="9" height="17" viewBox="0 0 9 17"><path d="M1.5 5.20 h6 l-3 -3.4z" fill="#000"/><path d="M1.5 11.00 h6 l-3 3.4z" fill="#000"/></svg>
<div style="left:620.30px;top:120.69px;font:11px/11px 'Liberation Sans';color:#000;white-space:pre;letter-spacing:0.593px;">0.000</div>
<div style="left:683px;top:116px;width:1px;height:21px;background:#b3b1ab;"></div>
<div style="left:684px;top:116px;width:1px;height:21px;background:#fff;"></div>
<div style="left:905px;top:106px;width:1px;height:40px;background:#000;"></div>
<div style="left:906px;top:107px;width:1px;height:38px;background:#fff;"></div>
<div style="left:913px;top:107px;width:100px;height:44px;background:#dcdad5;"></div>
<div style="left:913.50px;top:110.69px;font:11px/11px 'Liberation Sans';color:#000;white-space:pre;letter-spacing:-0.027px;">Fill:</div>
<div style="left:954px;top:107px;width:51px;height:19px;background:#000;"></div>
<div style="left:913.50px;top:129.89px;font:11px/11px 'Liberation Sans';color:#000;white-space:pre;letter-spacing:0.392px;">Stroke:</div>
<div style="left:962.80px;top:129.89px;font:bold 11px/11px 'Liberation Sans';color:#000;white-space:pre;letter-spacing:0.909px;-webkit-text-stroke:.3px #000;">Unset</div>
<div style="left:1013px;top:145px;width:9px;height:1px;background:#000;"></div>
<div style="left:1017px;top:124px;width:5px;height:3px;background:#fff;"></div>
<div style="left:1019px;top:127px;width:3px;height:1px;background:#000;"></div>
<div style="left:1021px;top:124px;width:1px;height:3px;background:#000;"></div>
<div style="left:0px;top:155px;width:34px;height:1px;background:#000;"></div>
<div style="left:33px;top:145px;width:1px;height:558px;background:#000;"></div>
<div style="left:34px;top:146px;width:1px;height:556px;background:#fff;"></div>
<div style="left:0px;top:702px;width:34px;height:1px;background:#000;"></div>
<svg style="left:1px;top:147px;shape-rendering:crispEdges;" width="32" height="8" viewBox="0 0 32 8"><rect width="32" height="8" fill="#d8d6d1"/><rect y="7" width="32" height="1" fill="#b4b2ac"/><g transform="translate(1,1)"><rect width="31" height="6" fill="url(#pH)"/></g></svg>
<div style="left:0px;top:146px;width:33px;height:1px;background:#fff;"></div>
<div style="left:1px;top:156px;width:32px;height:1px;background:#fff;"></div>
<div style="left:2px;top:368px;width:30px;height:1px;background:#a9a7a1;"></div>
<div style="left:2px;top:368px;width:1px;height:30px;background:#a9a7a1;"></div>
<div style="left:3px;top:369px;width:29px;height:29px;background:#c4c2bd;box-sizing:border-box;border-top:1px solid #000;border-left:1px solid #000;border-bottom:1px solid #fff;border-right:1px solid #fff;"></div>
<svg style="left:0px;top:0px;" width="1024" height="768" viewBox="0 0 1024 768"><path d="M10.8 163.2 V179.6 L14.8 176.2 L17.4 182 L20.6 180.6 L18 175 L22.8 174.6z" fill="#000" stroke="#f4f4f2" stroke-width=".9" stroke-linejoin="round"/><path d="M7.5 210.6 C7.5 200.6 14 195 24.6 193.8" fill="none" stroke="#777" stroke-width="1"/><path d="M13.4 199.4 L26.2 208.4 L21.6 213.6z" fill="#000" stroke="#eee" stroke-width=".5"/><rect x="8.8" y="194.6" width="5.2" height="5.2" fill="#8a8ad8" stroke="#1a1aff" stroke-width="1.7"/><rect x="24.2" y="191.7" width="3.8" height="3.8" fill="#c0c0f4" stroke="#5a5aff" stroke-width="1"/><rect x="5.5" y="210.4" width="3.8" height="3.8" fill="#c0c0f4" stroke="#5a5aff" stroke-width="1"/><path d="M6.2 234.4 H9 C13 233.6 13.6 226.6 17.2 223.6 C20.4 221.2 25 222.4 24.8 226.4 C24.6 229.6 21 230 20.4 227.4 C19.4 230.6 22 234.2 25 234.4 H27.6 V243.4 H6.2z" fill="url(#gWave)"/><rect x="6.7" y="235" width="20.4" height="8" fill="none" stroke="#e4e4e4" stroke-width=".7"/><path d="M6.2 234.4 H9 C13 233.6 13.6 226.6 17.2 223.6 C20.4 221.2 25 222.4 24.8 226.4 C24.6 229.6 21 230 20.4 227.4 C19.4 230.6 22 234.2 25 234.4 H27.6" fill="none" stroke="#111" stroke-width="1.3"/><path d="M11.4 233.2 C14.6 231 15.2 226.4 18.4 224.6 C20.4 223.6 22.8 224 23.2 226" fill="none" stroke="#fff" stroke-width="1.1"/><path d="M18.4 265 L26.8 272.8" stroke="#7a5200" stroke-width="5.4" stroke-linecap="round"/><path d="M19.4 266 L26.6 272.6" stroke="#f5a911" stroke-width="3.6" stroke-linecap="round"/><path d="M18 264.4 L20.4 266.6" stroke="#888" stroke-width="4"/><circle cx="12.6" cy="259" r="7.3" fill="url(#gLens)" stroke="#222" stroke-width="1.3"/><rect x="7.5" y="283.6" width="19.4" height="18.8" fill="url(#gBlue)" stroke="#000" stroke-width="1.1"/><polygon points="7.7,316.3 18.7,311.3 19.6,325 7.5,328" fill="url(#gBoxL)"/><polygon points="18.7,311.3 26.9,318.7 26.5,330 19.6,325" fill="url(#gBoxR)"/><polygon points="7.5,328 19.6,325 26.5,330 16.3,334" fill="url(#gBoxB)"/><polygon points="7.7,316.3 18.7,311.3 26.9,318.7 26.5,330 16.3,334 7.5,328" fill="none" stroke="#8a8a8a" stroke-width="1" stroke-linejoin="round"/><circle cx="16.9" cy="352.8" r="9.2" fill="url(#gPink)" stroke="#000" stroke-width="1.2"/><polygon points="13.1,372.4 20.8,376.8 17.6,387 8.8,387.3 5.7,378.6" fill="url(#gYel)" stroke="#222" stroke-width="1" stroke-linejoin="round"/><polygon points="17.58,377.29 20.77,382.29 26.71,382.14 22.94,386.73 24.91,392.33 19.38,390.16 14.67,393.77 15.03,387.84 10.13,384.47 15.88,382.98" fill="url(#gYel)" stroke="#222" stroke-width="1" stroke-linejoin="round"/><polyline points="16.53,413.71 16.67,413.80 16.82,413.92 16.95,414.06 17.07,414.22 17.17,414.40 17.25,414.60 17.32,414.81 17.36,415.03 17.38,415.26 17.38,415.50 17.34,415.75 17.28,416.00 17.19,416.25 17.07,416.49 16.93,416.72 16.75,416.94 16.55,417.15 16.32,417.34 16.06,417.51 15.79,417.66 15.49,417.78 15.17,417.87 14.84,417.92 14.50,417.95 14.15,417.93 13.80,417.88 13.45,417.80 13.10,417.67 12.76,417.51 12.43,417.30 12.12,417.06 11.83,416.79 11.56,416.48 11.32,416.14 11.11,415.77 10.94,415.38 10.81,414.96 10.72,414.52 10.68,414.07 10.68,413.62 10.72,413.15 10.82,412.69 10.96,412.23 11.16,411.78 11.40,411.34 11.68,410.93 12.02,410.54 12.39,410.18 12.81,409.86 13.26,409.58 13.74,409.34 14.25,409.14 14.79,409.00 15.35,408.91 15.92,408.88 16.49,408.91 17.07,408.99 17.65,409.13 18.21,409.33 18.76,409.59 19.29,409.91 19.78,410.29 20.25,410.71 20.67,411.19 21.05,411.71 21.37,412.28 21.65,412.88 21.86,413.51 22.01,414.16 22.10,414.84 22.11,415.53 22.06,416.22 21.94,416.92 21.75,417.60 21.49,418.27 21.15,418.92 20.76,419.53 20.29,420.11 19.77,420.65 19.19,421.13 18.56,421.56 17.89,421.93 17.17,422.23 16.42,422.47 15.64,422.62 14.84,422.70 14.04,422.70 13.23,422.62 12.42,422.46 11.62,422.22 10.85,421.89 10.11,421.49 9.40,421.01 8.75,420.46 8.14,419.84 7.59,419.16 7.11,418.42 6.70,417.63 6.37,416.79 6.12,415.92 5.96,415.02 5.89,414.11 5.91,413.18 6.02,412.25 6.23,411.33 6.52,410.43 6.91,409.56 7.39,408.72 7.95,407.93 8.59,407.19 9.31,406.51 10.10,405.91 10.95,405.38 11.85,404.93 12.81,404.57 13.80,404.31 14.81,404.15 15.85,404.09 16.90,404.13 17.94,404.27 18.97,404.52 19.98,404.87 20.96,405.33 21.89,405.88 22.77,406.53 23.58,407.26 24.33,408.08 24.99,408.97 25.57,409.94 26.05,410.96 26.43,412.03 26.70,413.14 26.87,414.27 26.92,415.43 26.85,416.59 26.67,417.75 26.38,418.90 25.97,420.01 25.44,421.09 24.81,422.11" fill="none" stroke="#111" stroke-width="1.1"/><path d="M6 432.6 H11.6 L6.6 440.6 C9.8 439.2 12.2 440.2 12.4 443.4 C12.6 448.6 14 454.8 19.2 455 C23 455.2 25.8 452 26.6 448" fill="none" stroke="#1a1a1a" stroke-width="1.1" stroke-linejoin="round"/><path d="M19.6 431.6 C22 430.6 26.6 432.8 27.6 435.4 L23.8 443.4 L15.9 440.6z" fill="#f59c00"/><path d="M19.6 431.6 C20.8 431.1 22.4 431.3 23.6 431.9 L19.6 441.9 L15.9 440.6z" fill="#fff200"/><path d="M23.6 431.9 C24.8 432.4 25.8 433 26.6 433.8 L22 442.8 L19.6 441.9z" fill="#ffc400"/><path d="M15.9 440.6 L23.8 443.4 L17.1 451.6z" fill="#fff4dc"/><path d="M19.6 441.9 L23.8 443.4 L17.1 451.6z" fill="#f6d890"/><path d="M19.6 431.6 C22 430.6 26.6 432.8 27.6 435.4 L23.8 443.4 L17.1 451.6 L15.9 440.6z" fill="none" stroke="#3a2a00" stroke-width=".6" stroke-linejoin="round"/><path d="M16.5 448.4 L18.9 449.4 L17.1 451.8z" fill="#000"/><path d="M7 462.6 H18.6 L13.4 473 M7 462.6 C10 466 12.6 469.4 13.4 473 C13.8 477 14 480 15.6 482.2" fill="none" stroke="#1a1a1a" stroke-width="1" stroke-linejoin="round"/><path d="M9.6 483 H15" stroke="#111" stroke-width="1.1"/><rect x="5.3" y="480.7" width="4.2" height="4.2" fill="#fff" stroke="#000" stroke-width="1.1"/><circle cx="16.4" cy="483.4" r="1.4" fill="#fff" stroke="#000" stroke-width="1"/><path d="M20.4 461.6 C22.6 460.6 27.4 462.6 28.6 465.6 L25 473.4 L18.8 470.4z" fill="url(#gBucket)" stroke="#2f5573" stroke-width=".7" stroke-linejoin="round"/><path d="M18.8 470.4 L25 473.4 L23.8 476.2 L17.8 473.2z" fill="#f7cf3c" stroke="#8a6a00" stroke-width=".6" stroke-linejoin="round"/><path d="M18.6 474 L22.4 475.8 L17.4 482.4z" fill="#e6e6e6" stroke="#444" stroke-width=".7" stroke-linejoin="round"/><path d="M20.4 475 L17.6 481.8" stroke="#555" stroke-width=".6"/><path d="M5.2 491.2 C9 491.2 13 493.6 13.2 498 C13.4 502.6 11.6 508.6 13.6 512 C16.2 514.6 22.4 511.2 28.6 509.6 C23.6 512.2 17.6 517.2 12.2 515 C6.4 512.4 8.4 504 8.2 499.4 C8.1 496 7.2 493.2 5.2 491.2z" fill="#000"/><path d="M17 499.4 L25.6 503 C25.2 507.4 21.6 510.8 15.4 512.4 C14.2 507.4 14.8 503 17 499.4z" fill="#f9da4e" stroke="#1a1a1a" stroke-width=".9" stroke-linejoin="round"/><path d="M15.8 511.8 L19.4 505.4" stroke="#000" stroke-width="1"/><circle cx="19.6" cy="505" r="1.1" fill="#000"/><path d="M18.6 498.4 L26.2 501.4 L25.6 503 L17 499.4z" fill="#f2f2f2" stroke="#555" stroke-width=".5"/><path d="M20.2 491.6 L28.6 493.8 L26.8 499.4 L19 496.6z" fill="url(#gBucket)" stroke="#2a4a6a" stroke-width=".6" stroke-linejoin="round"/><path d="M19 496.6 L26.8 499.4 L26.2 501.4 L18.6 498.4z" fill="#dc1c1c"/><polygon points="16.9,521.4 26.2,527 16.3,543.2 6.9,537.6" fill="url(#gErase)" stroke="#000" stroke-width="1" stroke-linejoin="round"/><ellipse cx="15.4" cy="572.6" rx="10.2" ry="1.9" fill="#8fd6a0" stroke="#2f8a48" stroke-width=".8"/><path d="M8.6 558 C9 564 12 566.4 13.6 569 L14.8 572 h2 L15.6 567.4z" fill="#8fd6a0" stroke="#2f8a48" stroke-width=".7"/><path d="M8.4 557.8 L21.6 551.6 C24.6 553.4 27.4 559 27 562.8 L14.6 568.4 C11 566.6 8.8 562 8.4 557.8z" fill="url(#gBucket)" stroke="#1f4a6a" stroke-width=".9"/><path d="M8.4 557.8 C9 562 11 566.6 14.6 568.4" fill="none" stroke="#9fe0b0" stroke-width="1.6"/><path d="M11 556 L12.6 551.4 L15.6 561.6" fill="none" stroke="#333" stroke-width=".8"/><circle cx="15.8" cy="562.2" r="1" fill="#ddd" stroke="#333" stroke-width=".6"/><text x="5.2" y="602" style="font:bold 26.5px 'Liberation Sans';" fill="#000" transform="translate(5.2,0) scale(1.06,1) translate(-5.2,0)" stroke="#000" stroke-width=".4">A</text><path d="M23.6 582.4 h4.4 M25.8 582.4 V603.6 M23.6 603.6 h4.4" fill="none" stroke="#fff" stroke-width="2.6"/><path d="M23.8 582.4 h1.6 M27.8 582.4 h-1.6 M25.8 583 V603 M23.8 603.6 h1.6 M27.8 603.6 h-1.6" fill="none" stroke="#000" stroke-width="1"/><path d="M18.6 613.6 C23 614 24.8 617 24.6 627.4 M12.4 618.4 L9.4 627.4" fill="none" stroke="#222" stroke-width="1"/><rect x="10.6" y="611.6" width="8" height="6.8" fill="url(#gBlue)" stroke="#000" stroke-width="1"/><rect x="5.5" y="627.6" width="8" height="6.8" fill="url(#gBlue)" stroke="#000" stroke-width="1"/><rect x="20.7" y="627.6" width="8" height="6.8" fill="url(#gBlue)" stroke="#000" stroke-width="1"/><rect x="13.6" y="620.6" width="7.4" height="4.4" fill="#f6cf3a" stroke="#a88a10" stroke-width=".6"/><rect x="6" y="642.2" width="21.6" height="21" fill="url(#gGreen)"/><rect x="6.5" y="642.7" width="20.6" height="20" fill="none" stroke="#6fc07a" stroke-width="1"/><path d="M10.6 647.6 L23.2 658.2" stroke="#111" stroke-width="1.2"/><rect x="8.6" y="645.6" width="4" height="4" fill="#eee" stroke="#222" stroke-width="1"/><circle cx="23.3" cy="658.3" r="2" fill="#eee" stroke="#222" stroke-width="1"/><path d="M20.4 678.8 L12 688.2 L11.4 690.2 L13.4 689.6 L22.4 680.8z" fill="#bcd6f2" stroke="#1c2a3a" stroke-width=".9" stroke-linejoin="round"/><path d="M19.8 680.6 L13.4 687.8" stroke="#fff" stroke-width=".8"/><path d="M18.8 677 l5.4 5" stroke="#000" stroke-width="2.4" stroke-linecap="round"/><path d="M22 679.2 L26.2 674.4" stroke="#000" stroke-width="5" stroke-linecap="round"/><path d="M24.2 674.6 l1.6 -1.6" stroke="#666" stroke-width="1" stroke-linecap="round"/><path d="M10.4 690.2 c-2 2.2 -1.8 4.6 0 4.6 c1.8 0 2 -2.4 0 -4.6z" fill="#8ab4e4" stroke="#2a3f5a" stroke-width=".6"/></svg>
<svg style="left:0px;top:0px;shape-rendering:crispEdges;" width="1024" height="165" viewBox="0 0 1024 165"><rect x="61" y="161" width="1" height="3"/><rect x="74" y="158" width="1" height="6"/><rect x="86" y="161" width="1" height="3"/><rect x="98" y="158" width="1" height="6"/><rect x="111" y="161" width="1" height="3"/><rect x="123" y="158" width="1" height="6"/><rect x="135" y="161" width="1" height="3"/><rect x="148" y="158" width="1" height="6"/><rect x="160" y="161" width="1" height="3"/><rect x="173" y="149" width="1" height="15"/><rect x="185" y="161" width="1" height="3"/><rect x="197" y="158" width="1" height="6"/><rect x="210" y="161" width="1" height="3"/><rect x="222" y="158" width="1" height="6"/><rect x="234" y="161" width="1" height="3"/><rect x="247" y="158" width="1" height="6"/><rect x="259" y="161" width="1" height="3"/><rect x="272" y="158" width="1" height="6"/><rect x="284" y="161" width="1" height="3"/><rect x="296" y="149" width="1" height="15"/><rect x="309" y="161" width="1" height="3"/><rect x="321" y="158" width="1" height="6"/><rect x="333" y="161" width="1" height="3"/><rect x="346" y="158" width="1" height="6"/><rect x="358" y="161" width="1" height="3"/><rect x="370" y="158" width="1" height="6"/><rect x="383" y="161" width="1" height="3"/><rect x="395" y="158" width="1" height="6"/><rect x="408" y="161" width="1" height="3"/><rect x="420" y="149" width="1" height="15"/><rect x="432" y="161" width="1" height="3"/><rect x="445" y="158" width="1" height="6"/><rect x="457" y="161" width="1" height="3"/><rect x="469" y="158" width="1" height="6"/><rect x="482" y="161" width="1" height="3"/><rect x="494" y="158" width="1" height="6"/><rect x="507" y="161" width="1" height="3"/><rect x="519" y="158" width="1" height="6"/><rect x="531" y="161" width="1" height="3"/><rect x="544" y="149" width="1" height="15"/><rect x="556" y="161" width="1" height="3"/><rect x="568" y="158" width="1" height="6"/><rect x="581" y="161" width="1" height="3"/><rect x="593" y="158" width="1" height="6"/><rect x="606" y="161" width="1" height="3"/><rect x="618" y="158" width="1" height="6"/><rect x="630" y="161" width="1" height="3"/><rect x="643" y="158" width="1" height="6"/><rect x="655" y="161" width="1" height="3"/><rect x="667" y="149" width="1" height="15"/><rect x="680" y="161" width="1" height="3"/><rect x="692" y="158" width="1" height="6"/><rect x="705" y="161" width="1" height="3"/><rect x="717" y="158" width="1" height="6"/><rect x="729" y="161" width="1" height="3"/><rect x="742" y="158" width="1" height="6"/><rect x="754" y="161" width="1" height="3"/><rect x="766" y="158" width="1" height="6"/><rect x="779" y="161" width="1" height="3"/><rect x="791" y="149" width="1" height="15"/><rect x="804" y="161" width="1" height="3"/><rect x="816" y="158" width="1" height="6"/><rect x="828" y="161" width="1" height="3"/><rect x="841" y="158" width="1" height="6"/><rect x="853" y="161" width="1" height="3"/><rect x="865" y="158" width="1" height="6"/><rect x="878" y="161" width="1" height="3"/><rect x="890" y="158" width="1" height="6"/><rect x="903" y="161" width="1" height="3"/><rect x="915" y="149" width="1" height="15"/><rect x="927" y="161" width="1" height="3"/><rect x="940" y="158" width="1" height="6"/><rect x="952" y="161" width="1" height="3"/><rect x="964" y="158" width="1" height="6"/><rect x="977" y="161" width="1" height="3"/><rect x="989" y="158" width="1" height="6"/></svg>
<div style="left:50.90px;top:146.04px;font:9.4px/9.4px 'Liberation Sans';color:#000;white-space:pre;clip-path:inset(0 0 0 1.9px);">-750</div>
<div style="left:174.90px;top:146.04px;font:9.4px/9.4px 'Liberation Sans';color:#000;white-space:pre;">-500</div>
<div style="left:297.90px;top:146.04px;font:9.4px/9.4px 'Liberation Sans';color:#000;white-space:pre;">-250</div>
<div style="left:421.90px;top:146.04px;font:9.4px/9.4px 'Liberation Sans';color:#000;white-space:pre;">0</div>
<div style="left:545.90px;top:146.04px;font:9.4px/9.4px 'Liberation Sans';color:#000;white-space:pre;">250</div>
<div style="left:668.90px;top:146.04px;font:9.4px/9.4px 'Liberation Sans';color:#000;white-space:pre;">500</div>
<div style="left:792.90px;top:146.04px;font:9.4px/9.4px 'Liberation Sans';color:#000;white-space:pre;">750</div>
<div style="left:916.90px;top:146.04px;font:9.4px/9.4px 'Liberation Sans';color:#000;white-space:pre;">1000</div>
<svg style="left:793px;top:157px;" width="8" height="6" viewBox="0 0 8 6"><path d="M0 0 h7.2 l-3.6 4.6z" fill="#000"/></svg>
<svg style="left:0px;top:0px;shape-rendering:crispEdges;" width="52" height="686" viewBox="0 0 52 686"><rect x="49" y="168" width="2" height="1"/><rect x="46" y="180" width="5" height="1"/><rect x="49" y="193" width="2" height="1"/><rect x="46" y="205" width="5" height="1"/><rect x="49" y="218" width="2" height="1"/><rect x="38" y="230" width="13" height="1"/><rect x="49" y="242" width="2" height="1"/><rect x="46" y="255" width="5" height="1"/><rect x="49" y="267" width="2" height="1"/><rect x="46" y="279" width="5" height="1"/><rect x="49" y="292" width="2" height="1"/><rect x="46" y="304" width="5" height="1"/><rect x="49" y="317" width="2" height="1"/><rect x="46" y="329" width="5" height="1"/><rect x="49" y="341" width="2" height="1"/><rect x="38" y="354" width="13" height="1"/><rect x="49" y="366" width="2" height="1"/><rect x="46" y="379" width="5" height="1"/><rect x="49" y="391" width="2" height="1"/><rect x="46" y="403" width="5" height="1"/><rect x="49" y="416" width="2" height="1"/><rect x="46" y="428" width="5" height="1"/><rect x="49" y="440" width="2" height="1"/><rect x="46" y="453" width="5" height="1"/><rect x="49" y="465" width="2" height="1"/><rect x="38" y="478" width="13" height="1"/><rect x="49" y="490" width="2" height="1"/><rect x="46" y="502" width="5" height="1"/><rect x="49" y="515" width="2" height="1"/><rect x="46" y="527" width="5" height="1"/><rect x="49" y="539" width="2" height="1"/><rect x="46" y="552" width="5" height="1"/><rect x="49" y="564" width="2" height="1"/><rect x="46" y="577" width="5" height="1"/><rect x="49" y="589" width="2" height="1"/><rect x="38" y="601" width="13" height="1"/><rect x="49" y="614" width="2" height="1"/><rect x="46" y="626" width="5" height="1"/><rect x="49" y="638" width="2" height="1"/><rect x="46" y="651" width="5" height="1"/><rect x="49" y="663" width="2" height="1"/><rect x="46" y="676" width="5" height="1"/></svg>
<div style="left:38.20px;top:230.84px;font:9.4px/9.4px 'Liberation Sans';color:#000;white-space:pre;">1</div>
<div style="left:38.20px;top:238.94px;font:9.4px/9.4px 'Liberation Sans';color:#000;white-space:pre;">0</div>
<div style="left:38.20px;top:247.04px;font:9.4px/9.4px 'Liberation Sans';color:#000;white-space:pre;">0</div>
<div style="left:38.20px;top:255.14px;font:9.4px/9.4px 'Liberation Sans';color:#000;white-space:pre;">0</div>
<div style="left:38.20px;top:354.84px;font:9.4px/9.4px 'Liberation Sans';color:#000;white-space:pre;">7</div>
<div style="left:38.20px;top:362.94px;font:9.4px/9.4px 'Liberation Sans';color:#000;white-space:pre;">5</div>
<div style="left:38.20px;top:371.04px;font:9.4px/9.4px 'Liberation Sans';color:#000;white-space:pre;">0</div>
<div style="left:38.20px;top:478.84px;font:9.4px/9.4px 'Liberation Sans';color:#000;white-space:pre;">5</div>
<div style="left:38.20px;top:486.94px;font:9.4px/9.4px 'Liberation Sans';color:#000;white-space:pre;">0</div>
<div style="left:38.20px;top:495.04px;font:9.4px/9.4px 'Liberation Sans';color:#000;white-space:pre;">0</div>
<div style="left:38.20px;top:601.84px;font:9.4px/9.4px 'Liberation Sans';color:#000;white-space:pre;">2</div>
<div style="left:38.20px;top:609.94px;font:9.4px/9.4px 'Liberation Sans';color:#000;white-space:pre;">5</div>
<div style="left:38.20px;top:618.04px;font:9.4px/9.4px 'Liberation Sans';color:#000;white-space:pre;">0</div>
<svg style="left:44px;top:517px;" width="7" height="9" viewBox="0 0 7 9"><path d="M1 .5 v8 l4.6 -4z" fill="#000"/></svg>
<div style="left:51px;top:164px;width:944px;height:521px;background:#fff;overflow:hidden;">
<svg style="left:0;top:0" width="944" height="521">
<g shape-rendering="crispEdges">
<rect x="369.5" y="40.5" width="368" height="600" fill="none" stroke="#5a5a5a" stroke-width="1"/>
<rect x="738" y="42" width="2" height="600" fill="#606060"/>
</g>
<g transform="translate(-51,-164)"><path d="M663.01,525.66 C643.25,558.69 560.25,458.36 528.13,479.55 C496.00,500.74 555.54,616.54 517.40,621.69 C479.26,626.84 505.95,499.39 469.36,487.49 C432.76,475.58 379.35,594.33 351.54,567.73 C323.73,541.12 440.02,482.53 426.51,446.49 C413.00,410.45 286.85,442.73 290.32,404.40 C293.78,366.07 412.09,420.46 431.85,387.43 C451.60,354.39 347.71,275.90 379.84,254.71 C411.97,233.52 443.21,359.93 481.35,354.77 C519.49,349.62 516.09,219.45 552.69,231.36 C589.29,243.27 509.94,346.51 537.75,373.12 C565.55,399.73 665.20,315.91 678.71,351.95 C692.22,387.99 562.03,390.32 558.56,428.65 C555.10,466.98 682.76,492.63 663.01,525.66Z" fill="#000"/></g>
<g shape-rendering="crispEdges" stroke="#4b4b4b" stroke-width="1" stroke-dasharray="4 4" fill="none"><path d="M239 66.5 H630" stroke-dashoffset="2"/><path d="M239 458.5 H630" stroke-dashoffset="2"/><path d="M239.5 66 V459" stroke-dashoffset="5"/><path d="M629.5 66 V459" stroke-dashoffset="5"/></g>
<g fill="none" stroke="#0fcc6c" stroke-width="2.8" stroke-linejoin="round" stroke-linecap="round">
<polyline points="496.8,45.0 502.1,48.0 505.4,50.9 510.7,53.0 514.1,57.9 517.4,63.2 520.7,67.9 524.7,73.2 527.1,79.2 528.4,85.1 531.3,94.4 534.0,102.4 536.3,109.0 537.7,114.0 538.0,123.3 536.6,132.6 533.3,141.9 528.7,149.8 524.0,157.8 519.4,164.4 513.4,169.1 506.1,171.1 498.1,171.7 490.2,173.1 482.2,172.0 471.6,170.4 464.9,166.4 458.3,159.1 453.6,151.2 451.6,144.5 453.6,139.2 454.3,132.6 458.3,124.6 462.3,116.6 467.6,106.8 470.9,99.7 474.9,91.8 478.2,83.8 480.9,75.8 482.8,67.9 485.5,61.2 488.8,53.9 492.1,48.6 496.8,45.0"/><polyline points="523.1,93.1 524.7,89.1 528.4,85.4 538.0,83.1 545.9,80.5 553.9,78.8 561.9,79.8 569.8,81.2 573.2,82.5"/><polyline points="429.5,355.9 436.6,354.2 448.3,351.2 460.0,348.7 469.4,347.1 477.6,346.0 480.5,344.0 482.9,344.4 487.0,347.7 489.9,352.4 491.7,359.4 493.8,366.5 494.9,374.7 496.1,382.9 497.3,391.1 498.5,399.3 499.6,406.3 501.6,414.2 502.2,422.4 502.4,431.8 501.6,441.2 500.4,450.5 498.7,456.4 495.2,463.4 490.5,469.3 484.6,472.8 477.6,474.0 470.6,474.2 463.5,473.0 456.5,470.5 449.5,467.5 444.8,463.4 440.1,459.3 438.9,452.9 437.2,444.7 435.4,440.0 435.4,433.0 434.2,428.3 433.6,421.2 434.2,413.0 432.3,408.0 432.8,401.6 432.1,393.4 433.6,388.7 433.6,382.9 434.2,374.7 432.5,366.5 431.3,359.4 429.5,355.9"/><polyline points="492.8,451.1 496.9,452.6 501.0,453.1 506.9,453.5 511.6,455.0 516.3,454.3 519.2,456.4 522.1,454.0 525.1,453.8"/></g>
<g fill="#fff" stroke="#000" stroke-width="1"><path d="M477.9 311.2 l4 4.5 l-4 4.5 l-4 -4.5z"/><path d="M612.2 358 l4 4.5 l-4 4.5 l-4 -4.5z"/></g>
</svg>
</div>
<div style="left:621.20px;top:240.72px;font:19px/19px 'Liberation Sans';color:#0fcc6c;white-space:pre;letter-spacing:0.669px;-webkit-text-stroke:.35px #0fcc6c;">make this part longer</div>
<div style="left:576.30px;top:606.72px;font:19px/19px 'Liberation Sans';color:#0fcc6c;white-space:pre;letter-spacing:0.593px;-webkit-text-stroke:.35px #0fcc6c;">make this part shorter</div>
<div style="left:998px;top:168px;width:1px;height:517px;background:#8f8d87;"></div>
<div style="left:998px;top:168px;width:15px;height:1px;background:#8f8d87;"></div>
<div style="left:999px;top:169px;width:14px;height:515px;background:#c3c1bc;"></div>
<div style="left:999px;top:169px;width:14px;height:14px;background:#dcdad5;box-sizing:border-box;border-top:1px solid #fff;border-left:1px solid #fff;border-bottom:1px solid #000;border-right:1px solid #000;"></div>
<div style="left:1000px;top:181px;width:12px;height:1px;background:#9b9993;"></div>
<div style="left:1011px;top:170px;width:1px;height:12px;background:#9b9993;"></div>
<svg style="left:999px;top:169px;" width="14" height="14" viewBox="0 0 14 14"><path d="M3 8 h7.2 l-3.6 -4.3z" fill="#000"/></svg>
<div style="left:999px;top:670px;width:14px;height:14px;background:#dcdad5;box-sizing:border-box;border-top:1px solid #fff;border-left:1px solid #fff;border-bottom:1px solid #000;border-right:1px solid #000;"></div>
<div style="left:1000px;top:682px;width:12px;height:1px;background:#9b9993;"></div>
<div style="left:1011px;top:671px;width:1px;height:12px;background:#9b9993;"></div>
<svg style="left:999px;top:670px;" width="14" height="14" viewBox="0 0 14 14"><path d="M3 5 h7.2 l-3.6 4.3z" fill="#000"/></svg>
<div style="left:999px;top:339px;width:14px;height:150px;background:#dcdad5;box-sizing:border-box;border-top:1px solid #fff;border-left:1px solid #fff;border-bottom:1px solid #000;border-right:1px solid #000;"></div>
<div style="left:1000px;top:487px;width:12px;height:1px;background:#9b9993;"></div>
<div style="left:1011px;top:340px;width:1px;height:148px;background:#9b9993;"></div>
<div style="left:1013px;top:168px;width:1px;height:517px;background:#fff;"></div>
<div style="left:998px;top:684px;width:16px;height:1px;background:#fff;"></div>
<div style="left:51px;top:686px;width:944px;height:1px;background:#8f8d87;"></div>
<div style="left:51px;top:686px;width:1px;height:15px;background:#8f8d87;"></div>
<div style="left:52px;top:687px;width:942px;height:14px;background:#c3c1bc;"></div>
<div style="left:52px;top:687px;width:14px;height:14px;background:#dcdad5;box-sizing:border-box;border-top:1px solid #fff;border-left:1px solid #fff;border-bottom:1px solid #000;border-right:1px solid #000;"></div>
<div style="left:53px;top:699px;width:12px;height:1px;background:#9b9993;"></div>
<div style="left:64px;top:688px;width:1px;height:12px;background:#9b9993;"></div>
<svg style="left:52px;top:687px;" width="14" height="14" viewBox="0 0 14 14"><path d="M8 2.9 v7 l-4.2 -3.5z" fill="#000"/></svg>
<div style="left:980px;top:687px;width:14px;height:14px;background:#dcdad5;box-sizing:border-box;border-top:1px solid #fff;border-left:1px solid #fff;border-bottom:1px solid #000;border-right:1px solid #000;"></div>
<div style="left:981px;top:699px;width:12px;height:1px;background:#9b9993;"></div>
<div style="left:992px;top:688px;width:1px;height:12px;background:#9b9993;"></div>
<svg style="left:980px;top:687px;" width="14" height="14" viewBox="0 0 14 14"><path d="M5 2.9 v7 l4.2 -3.5z" fill="#000"/></svg>
<div style="left:113px;top:687px;width:699px;height:14px;background:#dcdad5;box-sizing:border-box;border-top:1px solid #fff;border-left:1px solid #fff;border-bottom:1px solid #000;border-right:1px solid #000;"></div>
<div style="left:114px;top:699px;width:697px;height:1px;background:#9b9993;"></div>
<div style="left:810px;top:688px;width:1px;height:12px;background:#9b9993;"></div>
<div style="left:994px;top:686px;width:1px;height:15px;background:#fff;"></div>
<div style="left:35px;top:701px;width:977px;height:1px;background:#fff;"></div>
<div style="left:35px;top:702px;width:977px;height:1px;background:#f6f5f3;"></div>
<svg style="left:0px;top:0px;" width="1024" height="768" viewBox="0 0 1024 768"><path d="M1009.2 160.6 l3.4 3.2" stroke="#6e6e6e" stroke-width="3" stroke-linecap="round"/><path d="M1009.6 160.6 l2.8 2.6" stroke="#b4b4b4" stroke-width="1" stroke-linecap="round"/><circle cx="1004.9" cy="155.9" r="6.7" fill="#f4f7fb" stroke="#8e8e8e" stroke-width=".9"/><circle cx="1004.9" cy="155.9" r="5.2" fill="#72a4dc"/><circle cx="1004.9" cy="155.9" r="5.2" fill="none" stroke="#a9c8ea" stroke-width=".8"/><path d="M1003 154.4 l2.2 -1.3 h.9 v5.6" fill="none" stroke="#3d6db3" stroke-width="2.6" stroke-linejoin="round"/><path d="M1003.2 154.3 l2 -1.1 h.6 v5.4" fill="none" stroke="#fff" stroke-width="1.5"/><path d="M1000.4 688.6 L1010.4 695.4 L1001.6 700z" fill="#8fb08f"/><path d="M1000.4 688.6 L1010.4 695.4 L1001.6 700z" fill="url(#pChk)" opacity=".7"/><path d="M1006 692.4 L1010.4 695.4 L1006.4 697.6z" fill="#b04ab0" opacity=".7"/><path d="M1001.6 700 l-.4 -4 l3 2z" fill="#4a4ad0" opacity=".7"/><path d="M186 754.6 C189 750.6 195.4 750.6 198.4 754.6 C195.4 758.4 189 758.4 186 754.6z" fill="#fff" stroke="#000" stroke-width="1"/><circle cx="192.2" cy="754.6" r="2.3" fill="#000"/><path d="M188 751.4 l-1.4 -2 M190.6 750.4 l-.6 -2.2 M193.8 750.4 l.6 -2.2 M196.4 751.4 l1.4 -2" stroke="#000" stroke-width=".9"/><path d="M207.4 754.4 v-2.4 a2.4 2.4 0 0 1 4.8 0 v1" fill="none" stroke="#333" stroke-width="1.2"/><rect x="206" y="754.4" width="8.4" height="6.2" fill="#f5e9a0" stroke="#8a7a20" stroke-width=".8"/><rect x="209.2" y="756.4" width="2" height="2.4" fill="#fff"/></svg>
<div style="left:0px;top:46px;width:1px;height:1px;background:#000;"></div>
<div style="left:0px;top:76px;width:1px;height:1px;background:#000;"></div>
<div style="left:0px;top:106px;width:1px;height:1px;background:#000;"></div>
<div style="left:0px;top:145px;width:1px;height:1px;background:#000;"></div>
<div style="left:0px;top:155px;width:1px;height:1px;background:#000;"></div>
<div style="left:0px;top:702px;width:1px;height:1px;background:#000;"></div>
<div style="left:1018px;top:409px;width:2px;height:2px;background:#fff;"></div>
<div style="left:1019px;top:410px;width:2px;height:2px;background:#000;"></div>
<div style="left:1018px;top:414px;width:2px;height:2px;background:#fff;"></div>
<div style="left:1019px;top:415px;width:2px;height:2px;background:#000;"></div>
<div style="left:1018px;top:419px;width:2px;height:2px;background:#fff;"></div>
<div style="left:1019px;top:420px;width:2px;height:2px;background:#000;"></div>
<div style="left:1018px;top:424px;width:2px;height:2px;background:#fff;"></div>
<div style="left:1019px;top:425px;width:2px;height:2px;background:#000;"></div>
<div style="left:1018px;top:429px;width:2px;height:2px;background:#fff;"></div>
<div style="left:1019px;top:430px;width:2px;height:2px;background:#000;"></div>
<div style="left:1018px;top:434px;width:2px;height:2px;background:#fff;"></div>
<div style="left:1019px;top:435px;width:2px;height:2px;background:#000;"></div>
<div style="left:1018px;top:439px;width:2px;height:2px;background:#fff;"></div>
<div style="left:1019px;top:440px;width:2px;height:2px;background:#000;"></div>
<div style="left:0px;top:703px;width:1012px;height:1px;background:#8f8d88;"></div>
<div style="left:0px;top:704px;width:1012px;height:1px;background:#000;"></div>
<div style="left:18px;top:705px;width:992px;height:16px;background:linear-gradient(90deg,#000000 0px 16px,#1a1a1a 16px 32px,#333333 32px 48px,#4d4d4d 48px 64px,#666666 64px 80px,#808080 80px 96px,#999999 96px 112px,#b3b3b3 112px 128px,#cccccc 128px 144px,#e6e6e6 144px 160px,#ececec 160px 176px,#f2f2f2 176px 192px,#f9f9f9 192px 208px,#ffffff 208px 224px,#800000 224px 240px,#ff0000 240px 256px,#808000 256px 272px,#ffff00 272px 288px,#008000 288px 304px,#00ff00 304px 320px,#008080 320px 336px,#00ffff 336px 352px,#000080 352px 368px,#0000ff 368px 384px,#800080 384px 400px,#ff00ff 400px 416px,#2b0000 416px 432px,#550000 432px 448px,#800000 448px 464px,#aa0000 464px 480px,#d40000 480px 496px,#ff0000 496px 512px,#ff2a2a 512px 528px,#ff5555 528px 544px,#ff8080 544px 560px,#ffaaaa 560px 576px,#ffd5d5 576px 592px,#280b0b 592px 608px,#501616 608px 624px,#782121 624px 640px,#a02c2c 640px 656px,#c83737 656px 672px,#d35f5f 672px 688px,#de8787 688px 704px,#e9afaf 704px 720px,#f4d7d7 720px 736px,#241c1c 736px 752px,#483737 752px 768px,#6c5353 768px 784px,#916f6f 784px 800px,#ac9393 800px 816px,#c8b7b7 816px 832px,#e3dbdb 832px 848px,#2b1100 848px 864px,#552200 864px 880px,#803300 880px 896px,#aa4400 896px 912px,#d45500 912px 928px,#ff6600 928px 944px,#ff7f2a 944px 960px,#ff9955 960px 976px,#ffb380 976px 992px);"></div>
<div style="left:2px;top:705px;width:16px;height:16px;background:#fff;"></div>
<div style="left:1px;top:704px;width:1px;height:17px;background:#000;"></div>
<svg style="left:2px;top:705px;" width="16" height="16" viewBox="0 0 16 16"><path d="M.5 .5 L15.5 15.5 M15.5 .5 L.5 15.5" stroke="#8c1c1c" stroke-width="1.5" fill="none"/></svg>
<div style="left:0px;top:721px;width:1012px;height:1px;background:#fff;"></div>
<div style="left:0px;top:722px;width:1012px;height:1px;background:#f1f0ed;"></div>
<svg style="left:1013px;top:703px;" width="9" height="12" viewBox="0 0 9 12"><path d="M6.2 2 v7.2 l-4.2 -3.6z" fill="#000"/></svg>
<div style="left:1px;top:727px;width:1010px;height:14px;background:#c3c1bc;"></div>
<div style="left:1px;top:726px;width:1010px;height:1px;background:#a9a7a1;"></div>
<div style="left:1px;top:727px;width:14px;height:14px;background:#dcdad5;box-sizing:border-box;border-top:1px solid #fff;border-left:1px solid #fff;border-bottom:1px solid #000;border-right:1px solid #000;"></div>
<div style="left:2px;top:739px;width:12px;height:1px;background:#9b9993;"></div>
<div style="left:13px;top:728px;width:1px;height:12px;background:#9b9993;"></div>
<svg style="left:1px;top:727px;" width="14" height="14" viewBox="0 0 14 14"><path d="M9 3.5 v7 l-4.5 -3.5z" fill="#8d8b86"/></svg>
<div style="left:15px;top:727px;width:143px;height:14px;background:#dcdad5;box-sizing:border-box;border-top:1px solid #fff;border-left:1px solid #fff;border-bottom:1px solid #000;border-right:1px solid #000;"></div>
<div style="left:16px;top:739px;width:141px;height:1px;background:#9b9993;"></div>
<div style="left:156px;top:728px;width:1px;height:12px;background:#9b9993;"></div>
<div style="left:997px;top:727px;width:14px;height:14px;background:#dcdad5;box-sizing:border-box;border-top:1px solid #fff;border-left:1px solid #fff;border-bottom:1px solid #000;border-right:1px solid #000;"></div>
<div style="left:998px;top:739px;width:12px;height:1px;background:#9b9993;"></div>
<div style="left:1009px;top:728px;width:1px;height:12px;background:#9b9993;"></div>
<svg style="left:997px;top:727px;" width="14" height="14" viewBox="0 0 14 14"><path d="M5 3.5 v7 l4.5 -3.5z" fill="#000"/></svg>
<div style="left:2.50px;top:743.09px;font:11px/11px 'Liberation Sans';color:#000;white-space:pre;letter-spacing:-0.027px;">Fill:</div>
<div style="left:45px;top:742px;width:77px;height:13px;background:#000;"></div>
<div style="left:2.50px;top:756.09px;font:11px/11px 'Liberation Sans';color:#000;white-space:pre;letter-spacing:0.409px;">Stroke:</div>
<div style="left:66.60px;top:756.09px;font:bold 11px/11px 'Liberation Sans';color:#000;white-space:pre;letter-spacing:0.959px;-webkit-text-stroke:.3px #000;">Unset</div>
<div style="left:126.40px;top:749.29px;font:11px/11px 'Liberation Sans';color:#000;white-space:pre;letter-spacing:-1.012px;">O:</div>
<div style="left:140px;top:744px;width:38px;height:21px;box-sizing:border-box;border-top:1px solid #9b9993;border-left:1px solid #9b9993;border-bottom:1px solid #fff;border-right:1px solid #fff;"></div>
<div style="left:141px;top:745px;width:36px;height:19px;background:#fff;box-sizing:border-box;border-top:1px solid #000;border-left:1px solid #000;border-right:1px solid #000;border-bottom:1px solid #e9e8e4;"></div>
<div style="left:166px;top:745px;width:1px;height:18px;background:#000;"></div>
<div style="left:167px;top:746px;width:9px;height:17px;background:#dcdad5;"></div>
<div style="left:167px;top:753px;width:9px;height:1px;background:#9b9993;"></div>
<div style="left:167px;top:754px;width:9px;height:1px;background:#fff;"></div>
<div style="left:167px;top:762px;width:9px;height:1px;background:#8a8882;"></div>
<svg style="left:167px;top:746px;" width="9" height="17" viewBox="0 0 9 17"><path d="M1.5 5.20 h6 l-3 -3.4z" fill="#8d8b86"/><path d="M1.5 11.00 h6 l-3 3.4z" fill="#000"/></svg>
<div style="left:144.60px;top:749.29px;font:11px/11px 'Liberation Sans';color:#000;white-space:pre;letter-spacing:0.323px;">100</div>
<div style="left:180px;top:743px;width:1px;height:25px;background:#a9a7a1;"></div>
<div style="left:181px;top:743px;width:1px;height:25px;background:#fff;"></div>
<div style="left:219px;top:742px;width:90px;height:25px;background:#dcdad5;box-sizing:border-box;border-top:1px solid #fff;border-left:1px solid #fff;border-bottom:1px solid #000;border-right:1px solid #000;"></div>
<div style="left:220px;top:765px;width:88px;height:1px;background:#9b9993;"></div>
<div style="left:307px;top:743px;width:1px;height:23px;background:#9b9993;"></div>
<div style="left:227.00px;top:749.99px;font:bold 11px/11px 'Liberation Sans';color:#000;white-space:pre;letter-spacing:1.317px;-webkit-text-stroke:.3px #000;">•Layer 1</div>
<div style="left:286px;top:746px;width:1px;height:17px;background:#a9a7a1;"></div>
<div style="left:287px;top:746px;width:1px;height:17px;background:#fff;"></div>
<svg style="left:290px;top:750px;" width="14" height="10" viewBox="0 0 14 10"><path d="M1 1.5 h11 l-5.5 6.5z" fill="#000"/></svg>
<div style="left:314.40px;top:746.95px;font:bold 14px/14px 'Liberation Sans';color:#000;white-space:pre;letter-spacing:1.101px;-webkit-text-stroke:.3px #000;">Drag</div>
<div style="left:355.10px;top:746.95px;font:14px/14px 'Liberation Sans';color:#000;white-space:pre;letter-spacing:0.288px;">to create a star.</div>
<div style="left:462.20px;top:746.95px;font:bold 14px/14px 'Liberation Sans';color:#000;white-space:pre;letter-spacing:0.840px;-webkit-text-stroke:.3px #000;">Drag controls</div>
<div style="left:568.10px;top:746.95px;font:14px/14px 'Liberation Sans';color:#000;white-space:pre;letter-spacing:0.375px;">to edit the star shape.</div>
<div style="left:715.40px;top:746.95px;font:bold 14px/14px 'Liberation Sans';color:#000;white-space:pre;letter-spacing:0.584px;-webkit-text-stroke:.3px #000;">Click</div>
<div style="left:756.50px;top:746.95px;font:14px/14px 'Liberation Sans';color:#000;white-space:pre;letter-spacing:0.330px;">to select.</div>
<div style="left:868px;top:743px;width:1px;height:25px;background:#a9a7a1;"></div>
<div style="left:869px;top:743px;width:1px;height:25px;background:#fff;"></div>
<div style="left:872.40px;top:743.09px;font:11px/11px 'Liberation Sans';color:#000;white-space:pre;letter-spacing:-0.993px;">X:</div>
<div style="left:872.40px;top:756.09px;font:11px/11px 'Liberation Sans';color:#000;white-space:pre;letter-spacing:-0.387px;">Y:</div>
<div style="left:891.60px;top:743.40px;font:11px/11px 'Liberation Mono';color:#000;white-space:pre;letter-spacing:-0.781px;-webkit-text-stroke:.25px #000;">759.63</div>
<div style="left:891.60px;top:756.40px;font:11px/11px 'Liberation Mono';color:#000;white-space:pre;letter-spacing:-0.781px;-webkit-text-stroke:.25px #000;">412.14</div>
<div style="left:935.20px;top:749.29px;font:11px/11px 'Liberation Sans';color:#000;white-space:pre;letter-spacing:-0.375px;">Z:</div>
<div style="left:948px;top:744px;width:57px;height:21px;box-sizing:border-box;border-top:1px solid #9b9993;border-left:1px solid #9b9993;border-bottom:1px solid #fff;border-right:1px solid #fff;"></div>
<div style="left:949px;top:745px;width:55px;height:19px;background:#fff;box-sizing:border-box;border-top:1px solid #000;border-left:1px solid #000;border-right:1px solid #000;border-bottom:1px solid #e9e8e4;"></div>
<div style="left:993px;top:745px;width:1px;height:18px;background:#000;"></div>
<div style="left:994px;top:746px;width:9px;height:17px;background:#dcdad5;"></div>
<div style="left:994px;top:753px;width:9px;height:1px;background:#9b9993;"></div>
<div style="left:994px;top:754px;width:9px;height:1px;background:#fff;"></div>
<div style="left:994px;top:762px;width:9px;height:1px;background:#8a8882;"></div>
<svg style="left:994px;top:746px;" width="9" height="17" viewBox="0 0 9 17"><path d="M1.5 5.20 h6 l-3 -3.4z" fill="#000"/><path d="M1.5 11.00 h6 l-3 3.4z" fill="#000"/></svg>
<div style="left:958.60px;top:749.29px;font:11px/11px 'Liberation Sans';color:#000;white-space:pre;letter-spacing:0.592px;">50%</div>
<svg style="left:1005px;top:750px;" width="18" height="18" viewBox="0 0 18 18"><path d="M17 3 L3 17 M17 7 L7 17 M17 11 L11 17 M17 15 L15 17" stroke="#a9a7a1" stroke-width="1"/><path d="M17 4 L4 17 M17 8 L8 17 M17 12 L12 17 M17 16 L16 17" stroke="#fff" stroke-width="1"/></svg>
</body></html>
